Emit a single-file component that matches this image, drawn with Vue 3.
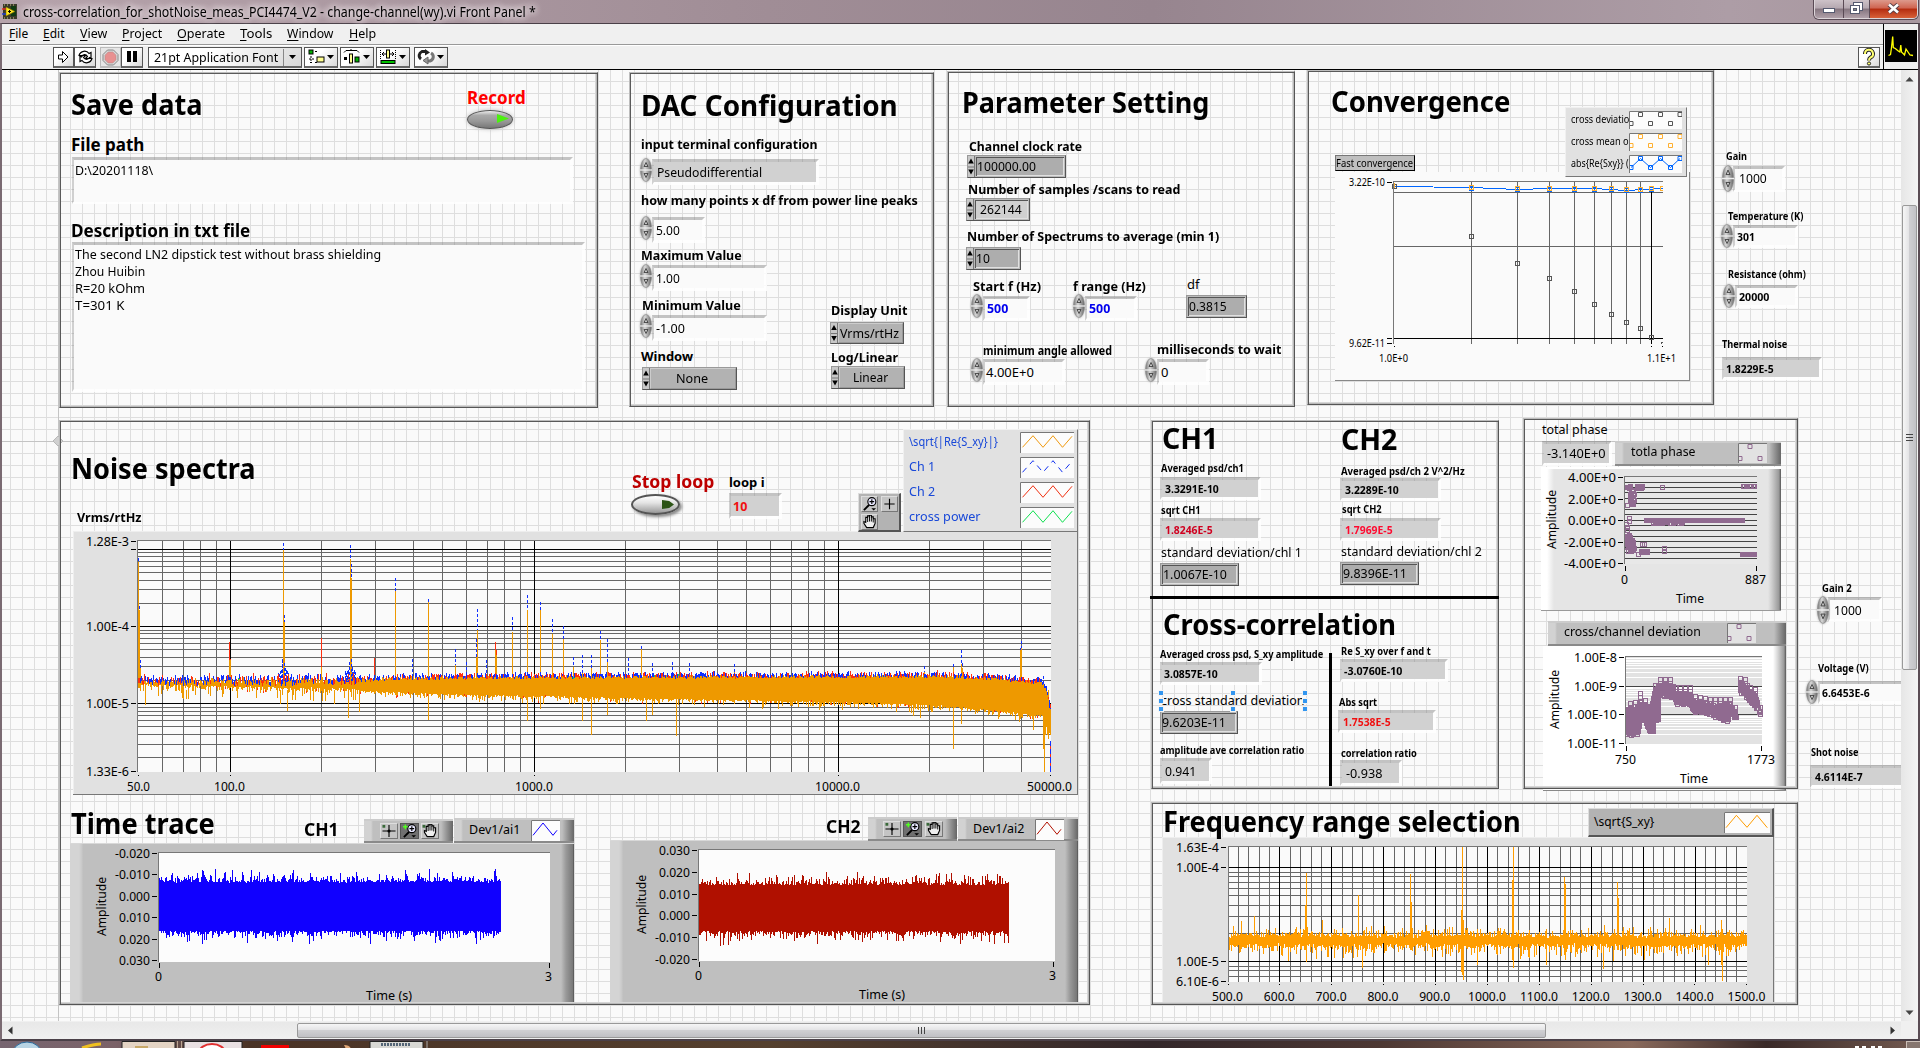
<script setup>
/* Front panel coordinates are window pixels; the canvas starts at (2, 70). */
const OX = 2
const OY = 70

const menus = [
  ['File', 9, 19], ['Edit', 43, 22], ['View', 80, 27], ['Project', 122, 40],
  ['Operate', 177, 48], ['Tools', 240, 32], ['Window', 287, 47], ['Help', 349, 27],
]

/* Scales a label horizontally so it takes exactly its assigned width. */
const vFit = {
  mounted(el, { value }) {
    const w = el.offsetWidth
    if (w && value) el.style.transform = `scaleX(${value / w})`
  },
}

const at = (x, y, x2, y2) => ({
  left: `${x - OX}px`, top: `${y - OY}px`, width: `${x2 - x}px`, height: `${y2 - y}px`,
})
const textAt = (x, base, size) => ({
  left: `${x - OX}px`, top: `${base - OY - size * 1.069 + 0.8}px`, fontSize: `${size}px`,
})

const frames = [
  [59, 72, 598, 408], [629, 72, 934, 407], [947, 71, 1295, 407], [1307, 70, 1714, 405],
  [59, 420, 1090, 1005], [1151, 420, 1499, 789], [1523, 418, 1798, 789], [1151, 802, 1798, 1005],
]

/* text, x, width, baseline, size, classes */
const labels = [
  ['Save data', 71, 132, 114, 28, 'b'],
  ['Record', 467, 59, 103, 17, 'b red'],
  ['File path', 71, 73, 150, 17, 'b'],
  ['D:\\20201118\\', 75, 78, 175, 13, ''],
  ['Description in txt file', 71, 179, 236, 17, 'b'],
  ['The second LN2 dipstick test without brass shielding', 75, 306, 259, 13, ''],
  ['Zhou Huibin', 75, 70, 276, 13, ''],
  ['R=20 kOhm', 75, 70, 293, 13, ''],
  ['T=301 K', 75, 49, 310, 13, ''],

  ['DAC Configuration', 641, 257, 115, 28, 'b'],
  ['input terminal configuration', 641, 177, 149, 13, 'b'],
  ['Pseudodifferential', 657, 105, 177, 13, ''],
  ['how many points x df from power line peaks', 641, 277, 205, 13, 'b'],
  ['5.00', 656, 24, 235, 13, ''],
  ['Maximum Value', 641, 101, 260, 13, 'b'],
  ['1.00', 656, 24, 283, 13, ''],
  ['Minimum Value', 642, 99, 310, 13, 'b'],
  ['-1.00', 656, 29, 333, 13, ''],
  ['Window', 641, 52, 361, 13, 'b'],
  ['None', 676, 32, 383, 13, ''],
  ['Display Unit', 831, 76, 315, 13, 'b'],
  ['Vrms/rtHz', 840, 59, 338, 13, ''],
  ['Log/Linear', 831, 67, 362, 13, 'b'],
  ['Linear', 853, 35, 382, 13, ''],

  ['Parameter Setting', 962, 247, 112, 28, 'b'],
  ['Channel clock rate', 969, 113, 151, 13, 'b'],
  ['100000.00', 977, 59, 171, 13, ''],
  ['Number of samples /scans to read', 968, 212, 194, 13, 'b'],
  ['262144', 980, 42, 214, 13, ''],
  ['Number of Spectrums to average (min 1)', 967, 252, 241, 13, 'b'],
  ['10', 976, 14, 263, 13, ''],
  ['Start f (Hz)', 973, 68, 291, 13, 'b'],
  ['f range (Hz)', 1073, 73, 291, 13, 'b'],
  ['500', 987, 21, 313, 13, 'b blue'],
  ['500', 1089, 21, 313, 13, 'b blue'],
  ['df', 1187, 12, 289, 13, ''],
  ['0.3815', 1189, 38, 311, 13, ''],
  ['minimum angle allowed', 983, 129, 354, 11.5, 'b'],
  ['4.00E+0', 986, 48, 377, 13, ''],
  ['milliseconds to wait', 1157, 124, 354, 13, 'b'],
  ['0', 1161, 7, 377, 13, ''],

  ['Convergence', 1331, 179, 111, 28, 'b'],
  ['cross deviatio', 1571, 58, 123, 11, ''],
  ['cross mean o', 1571, 58, 145, 11, ''],
  ['abs{Re{Sxy}} (', 1571, 58, 167, 11, ''],
  ['Fast convergence', 1336, 77, 167, 11, ''],

  ['Gain', 1726, 21, 159, 10.5, 'b'],
  ['1000', 1739, 28, 183, 13, ''],
  ['Temperature (K)', 1728, 75, 219, 10.5, 'b'],
  ['301', 1737, 18, 241, 11, 'b'],
  ['Resistance (ohm)', 1728, 78, 277, 10.5, 'b'],
  ['20000', 1739, 30, 301, 11, 'b'],
  ['Thermal noise', 1722, 65, 347, 10.5, 'b'],
  ['1.8229E-5', 1726, 48, 373, 11, 'b'],
  ['Gain 2', 1822, 30, 591, 10.5, 'b'],
  ['1000', 1834, 28, 615, 13, ''],
  ['Voltage (V)', 1818, 51, 671, 10.5, 'b'],
  ['6.6453E-6', 1822, 48, 697, 11, 'b'],
  ['Shot noise', 1811, 48, 755, 10.5, 'b'],
  ['4.6114E-7', 1815, 48, 781, 11, 'b'],

  ['Noise spectra', 71, 185, 478, 28, 'b'],
  ['Vrms/rtHz', 77, 65, 522, 13, 'b'],
  ['Stop loop', 632, 82, 487, 18, 'b maroon'],
  ['loop i', 729, 36, 487, 13, 'b'],
  ['10', 733, 14, 511, 12.5, 'b red2'],
  ['\\sqrt{|Re{S_xy}|}', 909, 89, 446, 13, 'lblue'],
  ['Ch 1', 909, 26, 471, 13, 'lblue'],
  ['Ch 2', 909, 26, 496, 13, 'lblue'],
  ['cross power', 909, 72, 521, 13, 'lblue'],

  ['Time trace', 71, 144, 833, 28, 'b'],
  ['CH1', 304, 35, 835, 17, 'b'],
  ['Dev1/ai1', 469, 51, 834, 12.5, ''],
  ['CH2', 826, 35, 832, 17, 'b'],
  ['Dev1/ai2', 973, 51, 833, 12.5, ''],

  ['CH1', 1162, 56, 448, 28, 'b'],
  ['CH2', 1341, 56, 449, 28, 'b'],
  ['Averaged psd/ch1', 1161, 83, 471, 10.5, 'b'],
  ['3.3291E-10', 1165, 54, 493, 11, 'b'],
  ['sqrt CH1', 1161, 40, 513, 10.5, 'b'],
  ['1.8246E-5', 1165, 48, 534, 11, 'b crimson'],
  ['standard deviation/chl 1', 1161, 141, 557, 12.5, ''],
  ['1.0067E-10', 1163, 64, 579, 13, ''],
  ['Averaged psd/ch 2 V^2/Hz', 1341, 124, 474, 10.5, 'b'],
  ['3.2289E-10', 1345, 54, 494, 11, 'b'],
  ['sqrt CH2', 1342, 40, 512, 10.5, 'b'],
  ['1.7969E-5', 1345, 48, 534, 11, 'b pinkred'],
  ['standard deviation/chl 2', 1341, 141, 556, 12.5, ''],
  ['9.8396E-11', 1343, 64, 578, 13, ''],
  ['Cross-correlation', 1163, 233, 634, 28, 'b'],
  ['Averaged cross psd, S_xy amplitude', 1160, 163, 657, 10.5, 'b'],
  ['3.0857E-10', 1164, 54, 678, 11, 'b'],
  ['cross standard deviation', 1161, 144, 705, 12.5, ''],
  ['9.6203E-11', 1162, 64, 727, 13, ''],
  ['amplitude ave correlation ratio', 1160, 144, 753, 10.5, 'b'],
  ['0.941', 1165, 31, 776, 13, ''],
  ['Re S_xy over f and t', 1341, 90, 654, 10.5, 'b'],
  ['-3.0760E-10', 1344, 58, 675, 11, 'b'],
  ['Abs sqrt', 1339, 38, 705, 10.5, 'b'],
  ['1.7538E-5', 1343, 48, 726, 11, 'b red2'],
  ['correlation ratio', 1341, 76, 756, 10.5, 'b'],
  ['-0.938', 1346, 36, 778, 13, ''],

  ['total phase', 1542, 66, 434, 12.5, ''],
  ['-3.140E+0', 1547, 59, 458, 13, ''],
  ['totla phase', 1631, 65, 456, 12.5, ''],
  ['cross/channel deviation', 1564, 137, 636, 12.5, ''],
  ['Frequency range selection', 1163, 358, 831, 28, 'b'],
  ['\\sqrt{S_xy}', 1594, 60, 826, 12, ''],
]

/* x, y, x2, y2, fill class */
const sunken = [
  [72, 157, 573, 204, ''], [72, 242, 585, 392, ''],
  [652, 159, 819, 185, 'gray'], [652, 217, 705, 243, ''], [652, 265, 767, 291, ''], [652, 315, 767, 341, ''],
  [983, 296, 1030, 321, ''], [1085, 296, 1137, 321, ''], [983, 359, 1065, 385, ''], [1157, 359, 1209, 385, ''],
  [1733, 166, 1785, 192, ''], [1733, 225, 1798, 248, ''], [1735, 285, 1798, 308, ''], [1722, 357, 1822, 380, 'gray'],
  [1828, 597, 1882, 622, ''], [1818, 681, 1904, 704, ''], [1810, 765, 1904, 788, 'gray'],
  [729, 493, 782, 519, 'gray'],
  [1160, 477, 1261, 500, 'gray'], [1160, 518, 1261, 541, 'gray'],
  [1340, 478, 1441, 501, 'gray'], [1340, 518, 1441, 541, 'gray'],
  [1160, 662, 1262, 685, 'gray'], [1160, 758, 1212, 784, 'gray'],
  [1340, 659, 1448, 682, 'gray'], [1338, 710, 1436, 733, 'gray'], [1340, 760, 1402, 786, 'gray'],
  [1542, 441, 1612, 466, 'gray'],
]

const rings = [[642, 367, 737, 390], [830, 322, 904, 344], [831, 366, 905, 389]]
const numerics = [[967, 155, 1066, 178, ''], [966, 198, 1030, 221, 'lit'], [966, 247, 1021, 270, '']]
const indicators = [
  [1186, 295, 1247, 318], [1160, 563, 1239, 586], [1340, 562, 1419, 585], [1160, 711, 1238, 734],
]
const knobs = [
  [640, 158, 652, 182], [640, 216, 652, 240], [640, 264, 652, 288], [640, 314, 652, 338],
  [971, 294, 983, 318], [1073, 294, 1085, 318], [971, 358, 983, 382], [1145, 358, 1157, 382],
  [1722, 165, 1734, 192], [1721, 224, 1733, 248], [1723, 284, 1735, 308],
  [1817, 596, 1829, 624], [1806, 680, 1818, 704],
]

/* x, y, x2, y2, class */
const plates = [
  [1565, 107, 1687, 177, 'flat'], [903, 429, 1078, 532, 'flat'], [858, 493, 901, 532, 'dark'],
  [364, 819, 453, 843, 'metal'], [454, 818, 574, 843, 'metal'],
  [868, 817, 957, 841, 'metal'], [958, 817, 1078, 841, 'metal'],
  [1615, 441, 1781, 466, 'metal'], [1548, 621, 1786, 646, 'metal'],
  [1588, 808, 1774, 837, 'dark'], [1335, 155, 1415, 171, 'tag'],
]

const zig3 = [[2.5, 15.3], [13, 3.7], [23, 15.3], [33, 3.7], [42.5, 15.3], [52, 4.3]]
const zig2 = [[2, 15.7], [12.4, 3.3], [23, 15.3], [33, 3.3], [43.3, 15.7]]
const zig1 = [[2, 15.3], [12, 3], [22, 15.3], [26, 10.3]]
const six = [[2, 12.5], [11.5, 3.5], [21.5, 12.5], [31.5, 3.5], [41.5, 12.5], [51, 3.5]]
const three = [[2, 15.5], [12, 3.5], [22, 15.5]]
const poly = (pts) => 'M' + pts.map((p) => p.join(' ')).join('L')
const sq = (pts, r = 2) => pts.map(([x, y]) => `M${x - r} ${y - r}h${2 * r}v${2 * r}h${-2 * r}z`).join('')
const swatch = (x, y, w, h, color, d, extra = {}) => ({ x, y, w, h, color, d, ...extra })
const swatches = [
  swatch(1020, 432, 54, 21, '#f09a10', poly(zig3)),
  swatch(1020, 457, 54, 21, '#1030f0', poly(zig3), { dash: '6 5' }),
  swatch(1020, 482, 54, 21, '#f03010', poly(zig3)),
  swatch(1020, 507, 54, 21, '#10e050', poly(zig3)),
  swatch(1629, 111, 53, 18, '#555', sq(six)),
  swatch(1629, 133, 53, 18, '#ffb030', sq(six)),
  swatch(1629, 155, 53, 18, '#0066ff', poly(six) + sq(six)),
  swatch(531, 820, 29, 21, '#1000ff', poly(zig1)),
  swatch(1035, 819, 29, 21, '#b01000', poly(zig1)),
  swatch(1738, 443, 29, 20, '#906a90', sq(three), { bg: '#e2e2e2' }),
  swatch(1727, 623, 29, 20, '#906a90', sq(three), { bg: '#e2e2e2' }),
  swatch(1724, 812, 46, 21, '#ff9d00', poly(zig2)),
]

/* x, y, w, h, tool, pressed */
const tools = [
  [861, 496, 17, 16, 'zoom', false], [881, 496, 17, 16, 'cross', false], [861, 514, 17, 16, 'hand', false],
  [380, 823, 18, 16, 'cursor', false], [400, 823, 19, 16, 'zoomled', true], [421, 823, 18, 16, 'handled', false],
  [883, 821, 18, 16, 'cursor', false], [903, 821, 19, 16, 'zoomled', true], [925, 821, 18, 16, 'handled', false],
]

/* ---------- waveforms ---------- */
function prng(seed) {
  let a = seed
  return () => {
    a = (a + 0x6d2b79f5) | 0
    let t = Math.imul(a ^ (a >>> 15), 1 | a)
    t = (t + Math.imul(t ^ (t >>> 7), 61 | t)) ^ t
    return ((t ^ (t >>> 14)) >>> 0) / 4294967296
  }
}
const lerp = (table, x) => {
  for (let i = 1; i < table.length; i++) {
    if (x <= table[i][0]) {
      const [x0, y0] = table[i - 1]
      const [x1, y1] = table[i]
      return y0 + ((y1 - y0) * (x - x0)) / (x1 - x0)
    }
  }
  return table[table.length - 1][1]
}
const seg = (x, a, b) => `M${Math.round(x) + 0.5} ${a.toFixed(1)}V${b.toFixed(1)}`
const dashed = (x, a, b) => {
  let d = ''
  for (let y = a; y < b; y += 5) d += seg(x, y, Math.min(y + 3.4, b))
  return d
}
const hl = (ys, a, b) => ys.map((y) => `M${a} ${Math.floor(y) + 0.5}H${b}`).join('')
const vl = (xs, a, b) => xs.map((x) => `M${Math.floor(x) + 0.5} ${a}V${b}`).join('')

function spectrum() {
  const r = prng(11)
  const topT = [[138, 681], [340, 680], [400, 677], [550, 676], [940, 675], [1000, 678], [1042, 682], [1046, 690], [1050, 708]]
  const botT = [[138, 686], [340, 690], [450, 694], [600, 697], [850, 702], [940, 705], [1000, 711], [1042, 715], [1050, 735]]
  let o = '', b = '', rd = '', g = ''
  for (let x = 138; x <= 1050; x++) {
    const left = x < 360
    const t = lerp(topT, x) + (left ? (r() - 0.5) * 7 : r() * 3 - 1)
    const e = -Math.log(1 - r() * 0.97)
    const bt = lerp(botT, x) + (left ? e * 4.2 - 2 : e * 2.6)
    o += seg(x, t, Math.min(bt, 772))
    const k = r()
    if (k < 0.5) b += seg(x, t - 1 - r() * 3, t + (left ? 2 : 1))
    else if (k < 0.8) rd += seg(x, t - 1 - r() * (left ? 4 : 3), t + (left ? 2 : 1))
    else if (k < 0.81) g += seg(x, t - 1, t + 1)
    if (r() < 0.05) rd += seg(x, bt - 1, bt + 1)
  }
  const near = (x0) => {
    for (let d = -5; d <= 5; d++) if (d) b += dashed(x0 + d, 679 - 16 / Math.abs(d) - r() * 5, 682)
  }
  near(283); near(350)
  /* x, blue top, orange top, optional lower end, red flag */
  const spikes = [
    [138, 557.5, 562], [139, 606, 610], [140, 660, 668], [229, 642, 660, 0, 1], [230, 659, 660, 0, 1], [283, 543, 549.5], [284, 615, 622],
    [321, 638, 667, 0, 1], [350, 545, 559], [351, 564, 578], [374, 658, 675, 0, 1], [395, 578, 591], [428, 599, 602, 720],
    [455, 649, 665], [476, 639, 657], [477, 609, 630], [486, 660, 676], [495, 642, 650, 0, 1], [496, 650, 655, 0, 1], [512, 617, 632],
    [527, 595, 610, 721], [540, 602, 610, 709], [552, 619, 634], [563, 626, 639], [573, 657, 667], [582, 655, 673, 721],
    [591, 655, 668, 735], [600, 631, 640], [607, 639, 662, 715], [628, 658, 676], [641, 646, 649], [652, 663, 676, 715],
    [672, 662, 675], [689, 663, 676], [734, 664, 672], [412, 659, 676], [466, 662, 676], [953, 664, 667, 749],
    [961, 650, 664, 724], [962, 663, 668], [1021, 641, 648], [1020, 648, 650], [924, 666, 672], [1043, 676, 684],
  ]
  for (const [x, bt, ot, low, isRed] of spikes) {
    o += seg(x, ot, low || 688)
    if (isRed) rd += seg(x, bt, ot)
    else b += dashed(x, bt, ot)
  }
  for (const [x, y] of [[348, 718], [359, 712], [287, 711], [145, 705], [186, 699], [280, 704], [334, 704], [646, 721], [676, 736], [913, 716], [920, 718], [1033, 730], [1044, 772], [1043, 749], [1045, 735], [1048, 739]])
    o += seg(x, 690, y)
  b += seg(1049, 700, 708) + 'M1050.5 705V709M1050.5 741V746M1050.5 749V754M1050.5 757V763M1050.5 766V772'
  rd += 'M1050.5 746V749M1050.5 754V757M1050.5 763V766'
  return { o, b, rd, g }
}
const sp = spectrum()

function burst(seed, x0, x1, top, bot) {
  const r = prng(seed)
  let d = ''
  for (let x = x0; x <= x1; x++) {
    const u = -Math.log(1 - r() * 0.98)
    const l = -Math.log(1 - r() * 0.98)
    d += seg(x, top - u * 3.7, bot + l * 3.7)
  }
  return d
}

function rangeWave() {
  const r = prng(77)
  let d = ''
  for (let x = 1228; x <= 1746; x++) {
    const u = -Math.log(1 - r() * 0.95)
    const l = -Math.log(1 - r() * 0.97)
    d += seg(x, 935 - u * 3.6 + r() * 3, 946 + l * 4.2 - r() * 3)
  }
  const fx = (f) => 1228 + (f - 500) * 0.519
  for (const [f, t, b] of [
    [550, 916, 950], [649, 905, 950], [651, 873, 962], [750, 895, 950], [751, 922, 950], [850, 874, 950], [852, 902, 950],
    [948, 910, 972], [950, 847, 975], [952, 920, 980], [1048, 880, 960], [1050, 847, 968], [1148, 877, 955], [1150, 884, 960],
    [1249, 882, 950], [1251, 898, 950], [1350, 918, 950], [1449, 920, 965], [1451, 930, 981], [681, 920, 945], [526, 921, 940],
    [616, 940, 961], [758, 935, 968], [980, 940, 965], [1112, 940, 965], [1223, 940, 969], [1241, 940, 961], [1425, 940, 965], [1302, 940, 960], [692, 940, 957],
  ]) d += seg(fx(f), t, b)
  return d
}

const logTicks = (lo, hi, f) => {
  const minor = []
  const major = []
  for (let e = Math.floor(Math.log10(lo)); e <= Math.log10(hi); e++)
    for (let k = 1; k < 10; k++) {
      const v = k * 10 ** e
      if (v > lo * 1.001 && v < hi * 0.999) (k === 1 ? major : minor).push(f(v))
    }
  return { minor, major }
}

const nsY = logTicks(1.33e-6, 1.28e-3, (v) => 549.3 - (Math.log10(v) + 3) * 77.2)
const nsX = logTicks(50, 50000, (v) => 230.4 + (Math.log10(v) - 2) * 303.9)
const frY = logTicks(6.1e-6, 1.63e-4, (v) => 867.7 - (Math.log10(v) + 4) * 94)
const dvY = logTicks(1e-11, 1e-8, (v) => 657.3 - (Math.log10(v) + 8) * 28.7)
const frMinor = []
const frMajor = []
for (let i = 1; i < 50; i++) (i % 5 ? frMinor : frMajor).push(1228 + i * 10.38)

const cvX = [1471, 1517, 1549, 1574, 1594, 1611, 1626, 1640, 1651]
const cvDev = [[1394.5, 186.5], [1471.5, 236.5], [1517.5, 263.5], [1549.5, 278.5], [1574.5, 291.5], [1594.5, 304.5], [1611.5, 314.5], [1626.5, 322.5], [1640.5, 328.5], [1651.5, 337.5]]
const cvMean = [187.5, 188.5, 188.5, 188.5, 188.5, 188.5, 189.5, 189.5, 188.5].map((y, i) => [cvX[i] + 0.5, y])
const cvAbs = cvMean.map(([x, y]) => [x, y + 1])

function phaseMarks() {
  const r = prng(5)
  const d = []
  const cloud = (x0, x1, y0, y1, n) => {
    for (let i = 0; i < n; i++) d.push([Math.round(x0 + r() * (x1 - x0)) + 0.5, Math.round(y0 + r() * (y1 - y0)) + 0.5])
  }
  cloud(1627, 1630, 486, 488, 5)
  cloud(1637, 1642, 486, 488, 30)
  cloud(1630, 1634, 489, 505, 26)
  cloud(1646, 1743, 520, 520, 260)
  cloud(1652, 1682, 521, 523, 36)
  cloud(1626, 1628, 520, 530, 3)
  cloud(1626, 1630, 535, 548, 45)
  cloud(1630, 1634, 540, 551, 40)
  cloud(1640, 1647, 551, 552, 20)
  cloud(1742, 1755, 554, 554, 50)
  cloud(1742, 1755, 486, 486, 14)
  d.push([1627.5, 505.5], [1632.5, 504.5], [1662.5, 487.5], [1629.5, 518.5], [1629.5, 521.5], [1642.5, 544.5], [1644.5, 544.5], [1664.5, 548.5], [1664.5, 551.5], [1638.5, 554.5], [1628.5, 551.5])
  return sq(d)
}
function deviationMarks() {
  const r = prng(9)
  const run = (tops, bots, x0, x1) => {
    const d = []
    for (let x = x0; x <= x1; x++) {
      const t = lerp(tops, x) + 1
      const b = lerp(bots, x) - 1 - r() * 3
      for (let y = t + 4 + r() * 4; y < b; y += 3) d.push([x + 0.5, Math.round(y + r() * 2) + 0.5])
      if (x % 5 === 0) d.push([x + 0.5, Math.round(t) + 0.5], [x + 0.5, Math.round(t) + 4.5])
    }
    return d
  }
  return sq([
    ...run(
      [[1626, 700], [1632, 703], [1637, 700], [1640, 692], [1645, 699], [1649, 711], [1652, 694], [1656, 680], [1662, 677], [1673, 679], [1674, 686], [1691, 686], [1692, 694], [1711, 698], [1730, 698], [1735, 706], [1739, 720]],
      [[1626, 736], [1638, 735], [1640, 720], [1645, 722], [1649, 733], [1653, 733], [1654, 722], [1658, 722], [1659, 697], [1673, 699], [1675, 705], [1690, 706], [1693, 713], [1711, 715], [1720, 721], [1727, 721], [1731, 713], [1739, 727]],
      1627, 1738),
    ...run([[1739, 677], [1746, 678], [1750, 686], [1755, 688], [1759, 703], [1761, 709]], [[1739, 692], [1746, 697], [1750, 703], [1756, 709], [1761, 717]], 1740, 1760),
  ])
}

const tick = (ys, x, w = 5) => ys.map((y) => `M${x} ${Math.floor(y) + 0.5}h${w}`).join('')
const foot = (xs, y, h = 2) => xs.map((x) => `M${Math.floor(x) + 0.5} ${y}v${h}`).join('')

const charts = [
  {
    box: [1335, 172, 1690, 381], cls: 'plain', size: 11, plot: [1393, 181, 1663, 344], fill: '#fafafa',
    layers: [
      ['#666', hl([192, 246], 1394, 1663) + vl(cvX.slice(0, 8), 182, 344)],
      ['#000', hl([338], 1394, 1663) + vl([1651], 190, 344)],
      ['#0066ff', 'M1394 186.5L1471 187.5L1517 189.5L1549 188.5L1594 188.5L1626 190.5L1663 188.5' + sq(cvAbs)],
      ['#555', sq(cvDev) + 'M1661.5 344V342.5H1663'],
      ['#ffb030', sq(cvMean) + 'M1394.5 183V188M1663 186.5h-3v4h3'],
      ['#000', tick([182, 338, 343], 1387) + foot([1394, 1651, 1662], 346, 1)],
    ],
    texts: [['3.22E-10', 1349, 36, 186], ['9.62E-11', 1349, 36, 347], ['1.0E+0', 1379, 29, 361.5], ['1.1E+1', 1647, 29, 361.5]],
  },
  {
    box: [73, 531, 1078, 795], cls: 'light', size: 13, plot: [137, 540, 1051, 772], fill: '#fafafa',
    layers: [
      ['#666', hl(nsY.minor, 138, 1051) + vl(nsX.minor, 541, 772)],
      ['#000', hl(nsY.major, 138, 1051) + vl(nsX.major, 541, 772)],
      ['#ee9900', sp.o], ['#1030ff', sp.b], ['#ff3010', sp.rd], ['#10e040', sp.g],
      ['#000', tick([541, 549, 626, 703, 771], 131) + foot([138, 230, 534, 838, 1050], 775, 1)],
    ],
    texts: [
      ['1.28E-3', 86, 43, 545.5], ['1.00E-4', 86, 43, 631], ['1.00E-5', 86, 43, 708], ['1.33E-6', 86, 43, 775.5],
      ['50.0', 127, 23, 791], ['100.0', 214, 31, 791], ['1000.0', 515, 38, 791], ['10000.0', 815, 45, 791], ['50000.0', 1027, 45, 791],
    ],
  },
  {
    box: [70, 843, 574, 1002], cls: 'bar', size: 12.5, plot: [158, 852, 550, 962], fill: '#fcfcfc',
    layers: [
      ['#1000ff', burst(3, 159, 500, 882.5, 930.5)],
      ['#000', tick([853, 874, 896, 917, 939, 960], 152) + foot([159, 549], 963, 5)],
    ],
    texts: [
      ['-0.020', 115, 35, 858], ['-0.010', 115, 35, 879], ['0.000', 119, 31, 901], ['0.010', 119, 31, 922], ['0.020', 119, 31, 944], ['0.030', 119, 31, 965],
      ['0', 155, 7, 981], ['3', 545, 7, 981], ['Time (s)', 366, 46, 1000], ['Amplitude', 106, 59, 936, 1],
    ],
  },
  {
    box: [610, 840, 1078, 1002], cls: 'bar', size: 12.5, plot: [698, 849, 1055, 961], fill: '#fcfcfc',
    layers: [
      ['#b01000', burst(8, 699, 1008, 885, 931)],
      ['#000', tick([850, 872, 894, 915, 937, 959], 692) + foot([699, 1053], 962, 5)],
    ],
    texts: [
      ['0.030', 659, 31, 855], ['0.020', 659, 31, 877], ['0.010', 659, 31, 899], ['0.000', 659, 31, 920], ['-0.010', 655, 35, 942], ['-0.020', 655, 35, 964],
      ['0', 695, 7, 980], ['3', 1049, 7, 980], ['Time (s)', 859, 46, 999], ['Amplitude', 646, 59, 934, 1],
    ],
  },
  {
    box: [1541, 467, 1781, 611], cls: 'phase', size: 12.5, plot: [1624, 476, 1757, 564], fill: '#e8e8e8',
    layers: [
      ['#444', hl(Array.from({ length: 15 }, (_, i) => 482 + i * 5.44), 1625, 1757)],
      ['#906a90', phaseMarks()],
      ['#000', tick([477, 499, 520, 542, 563], 1618) + foot([1625, 1756], 566, 5)],
    ],
    texts: [
      ['4.00E+0', 1568, 48, 482], ['2.00E+0', 1568, 48, 504], ['0.00E+0', 1568, 48, 525], ['-2.00E+0', 1564, 52, 547], ['-4.00E+0', 1564, 52, 568],
      ['0', 1621, 7, 584], ['887', 1745, 21, 584], ['Time', 1676, 28, 603], ['Amplitude', 1556, 59, 549, 1],
    ],
  },
  {
    box: [1543, 646, 1786, 791], cls: 'dev', size: 12.5, plot: [1625, 656, 1762, 744], fill: '#e2e2e2',
    layers: [
      ['#fff', hl(dvY.minor, 1626, 1762)],
      ['#444', hl([686, 714], 1626, 1762)],
      ['#906a90', deviationMarks()],
      ['#000', tick([657, 686, 714, 743], 1619) + foot([1626, 1761], 746, 5)],
    ],
    texts: [
      ['1.00E-8', 1574, 43, 662], ['1.00E-9', 1574, 43, 691], ['1.00E-10', 1567, 50, 719], ['1.00E-11', 1567, 50, 748],
      ['750', 1615, 21, 764], ['1773', 1747, 28, 764], ['Time', 1680, 28, 783], ['Amplitude', 1559, 59, 729, 1],
    ],
  },
  {
    box: [1162, 837, 1774, 1002], cls: 'light nob', size: 12.5, plot: [1228, 846, 1747, 982], fill: '#fafafa',
    layers: [
      ['#666', hl(frY.minor, 1229, 1747) + vl(frMinor, 847, 982)],
      ['#000', hl(frY.major, 1229, 1747) + vl(frMajor, 847, 982)],
      ['#ff9d00', rangeWave()],
      ['#000', tick([847, 867, 961, 981], 1221) + foot([1228, 1279, 1331, 1383, 1435, 1487, 1539, 1591, 1643, 1694, 1746], 984, 1)],
    ],
    texts: [
      ['1.63E-4', 1176, 43, 852], ['1.00E-4', 1176, 43, 872], ['1.00E-5', 1176, 43, 966], ['6.10E-6', 1176, 43, 986],
      ...[500, 600, 700, 800, 900].map((v, i) => [`${v}.0`, 1212 + i * 51.8, 31, 1001]),
      ...[1000, 1100, 1200, 1300, 1400, 1500].map((v, i) => [`${v}.0`, 1468 + i * 51.9, 38, 1001]),
    ],
  },
]

const handles = [[1159, 691], [1231, 691], [1303, 691], [1159, 699], [1303, 699], [1159, 707], [1231, 707], [1303, 707]]
</script>

<template>
  <div class="desktop">
    <header class="titlebar">
      <svg class="appicon" width="16" height="16" viewBox="0 0 16 16">
        <rect x="1" y="0" width="14" height="15" fill="#3a3a2a" />
        <path d="M2 1h1M5 1h1M8 1h1M11 1h1M2 14h1M5 14h1M8 14h1M11 14h1" stroke="#cc8" />
        <rect x="9" y="2" width="5" height="10" fill="#103a10" />
        <path d="M4 3L13 7.500L4 12z" fill="#ffe820" stroke="#887000" stroke-width=".6" />
        <path d="M6 7.500h3M7.500 6v3" stroke="#000" /><path d="M0 5h4" stroke="#e03020" stroke-width="1.500" /><path d="M0 10h4" stroke="#2040d0" stroke-width="1.500" />
      </svg>
      <span v-fit="513" class="wintitle">cross-correlation_for_shotNoise_meas_PCI4474_V2 - change-channel(wy).vi Front Panel *</span>
      <div class="winbtns">
        <span class="wb min"><svg width="12" height="12" viewBox="0 0 12 12"><rect x=".5" y="6.500" width="11" height="4" fill="#fff" stroke="#555a70" /></svg></span>
        <span class="wb max"><svg width="13" height="12" viewBox="0 0 13 12"><rect x="3.500" y=".5" width="9" height="8" fill="#fff" stroke="#555a70" /><rect x=".5" y="3.500" width="9" height="8" fill="#fff" stroke="#555a70" /><rect x="3.500" y="6.500" width="3" height="2" fill="#888" stroke="#555a70" /></svg></span>
        <span class="wb close"><svg width="13" height="11" viewBox="0 0 13 11"><path d="M2 1.500L11 9.500M11 1.500L2 9.500" stroke="#5a4048" stroke-width="4.500" /><path d="M2 1.500L11 9.500M11 1.500L2 9.500" stroke="#fff" stroke-width="2.600" /></svg></span>
      </div>
    </header>

    <div class="window">
      <div class="chrome">
        <div class="bars">
          <nav class="menubar">
            <span v-for="m in menus" :key="m[0]" class="menu" :style="{ left: m[1] - 2 + 'px' }"><span v-fit="m[2]" class="mt"><u>{{ m[0][0] }}</u>{{ m[0].slice(1) }}</span></span>
          </nav>
          <div class="toolbar">
            <span class="tb w21"><svg width="15" height="14" viewBox="0 0 15 14"><path d="M2.500 5h4V1.500L12 7L6.500 12.500V9h-4z" fill="#fff" stroke="#000" /></svg></span>
            <span class="tb w22"><svg width="17" height="16" viewBox="0 0 17 16"><path d="M2 6.500C3.500 1.500 9.500 1 12 4.500l2-1v6H8.500l2-2C9 5 6 5 4.500 8zM15 9.500c-1.500 5-7.500 5.500-10 2l-2 1V6.500h5.500l-2 2c1.500 2.500 4.500 2.500 6 0z" fill="#fff" stroke="#000" stroke-width="1.200" /></svg></span>
            <span class="tb w21 off gap"><svg width="17" height="17" viewBox="0 0 17 17"><path d="M5.500 1h6L16 5.500v6L11.500 16h-6L1 11.500v-6z" fill="#d8d8d8" stroke="#888" /><path d="M6.200 3h4.600L14 6.200v4.600L10.800 14H6.200L3 10.800V6.200z" fill="#e89090" stroke="#b08080" stroke-width=".5" /></svg></span>
            <span class="tb w22"><svg width="12" height="12" viewBox="0 0 12 12"><path d="M1 0h4v11H1zM7 0h4v11H7z" /></svg></span>
            <span class="tb font"><span class="ft"><span v-fit="124" class="mt big">21pt Application Font</span></span><i class="div"></i><svg width="9" height="6" viewBox="0 0 9 6"><path d="M1 1h7L4.500 5z" /></svg></span>
            <span class="tb w34"><svg width="28" height="16" viewBox="0 0 28 16"><rect x="2" y="1" width="4" height="4" fill="#00b000" stroke="#000" /><path d="M8 2.500h2M8 13.500h2M3 13.500h2M4 7v5M2 10h5" stroke="#000" stroke-dasharray="2 1" /><rect x="10" y="8" width="7" height="5" fill="#ffff90" stroke="#000" /><path d="M20 6h7l-3.500 4z" /></svg></span>
            <span class="tb w34"><svg width="28" height="16" viewBox="0 0 28 16"><path d="M1 3.500L3 1.500h11L16 3.500M8 1.500V0" fill="none" stroke="#000" /><rect x="1" y="8" width="3" height="3" /><rect x="6.500" y="5" width="3" height="9" fill="#ffff90" stroke="#000" /><rect x="12" y="8" width="4" height="5" fill="#00b000" stroke="#000" /><path d="M20 6h7l-3.500 4z" /></svg></span>
            <span class="tb w34"><svg width="28" height="16" viewBox="0 0 28 16"><path d="M1.500 1v9M16.500 1v9" stroke="#000" stroke-dasharray="1 1" /><path d="M3 5h4M11 5h4M5 3L3 5l2 2M13 3l2 2l-2 2" fill="none" stroke="#000" /><rect x="7.500" y="1" width="3" height="8" fill="#ffff90" stroke="#000" /><rect x="2" y="11.500" width="14" height="3" fill="#00c000" stroke="#000" /><path d="M20 6h7l-3.500 4z" /></svg></span>
            <span class="tb w34 gap"><svg width="28" height="16" viewBox="0 0 28 16"><path d="M4 10a5 4.500 0 0 1 1-7.500h4" fill="none" stroke="#222" stroke-width="3" /><path d="M8 0l5 3.500l-5 3z" fill="#222" /><path d="M14 4a5 4.500 0 0 1-1 8h-2" fill="none" stroke="#777" stroke-width="3" /><path d="M11 8v7l-5-3.500z" fill="#999" stroke="#666" /><path d="M20 6h7l-3.500 4z" /></svg></span>
            <span class="tb help"><svg width="14" height="18" viewBox="0 0 14 18"><path d="M3 6a4 4 0 1 1 5.500 3.500Q7 10.500 7 12.500" fill="none" stroke="#222" stroke-width="4" /><path d="M3 6a4 4 0 1 1 5.500 3.500Q7 10.500 7 12.500" fill="none" stroke="#ffff70" stroke-width="2" /><circle cx="7" cy="15.500" r="1.600" fill="#ffff70" stroke="#222" /></svg></span>
          </div>
        </div>
        <div class="viicon"><svg width="32" height="32" viewBox="0 0 32 32"><rect width="32" height="32" /><path d="M3.500 25.500l2-1l1-7l1.200-11l.6 11l2 1l3 2.500l1.500 1l1-7l.7 7l3 3l1.500-6l2 3l2 3l3 .5" fill="none" stroke="#ffff00" stroke-width="1.300" /></svg></div>
      </div>

      <div class="work">
        <main class="panel">
          <i class="origin-v"></i><i class="origin-h"></i>
          <svg class="origin" viewBox="0 0 10 10"><path d="M5 0L10 5L5 10L0 5z" fill="#d0d0d0" stroke="#b8b8b8" /></svg>

          <svg v-for="(c, i) in charts" :key="'c' + i" class="chart" :class="c.cls" :style="at(...c.box)" :viewBox="`${c.box[0]} ${c.box[1]} ${c.box[2] - c.box[0]} ${c.box[3] - c.box[1]}`">
            <rect :x="c.plot[0]" :y="c.plot[1]" :width="c.plot[2] - c.plot[0]" :height="c.plot[3] - c.plot[1]" :fill="c.fill" />
            <path v-for="(l, k) in c.layers" :key="k" class="px" :d="l[1]" fill="none" :stroke="l[0]" />
            <path class="px" :d="`M${c.plot[0] + .5} ${c.plot[3]}V${c.plot[1] + .5}H${c.plot[2]}`" fill="none" stroke="#777" />
            <text v-for="(t, k) in c.texts" :key="'t' + k" :x="t[1]" :y="t[3]" :textLength="t[2]" lengthAdjust="spacingAndGlyphs" :font-size="c.size" :transform="t[4] ? `rotate(-90 ${t[1]} ${t[3]})` : null">{{ t[0] }}</text>
          </svg>

          <div v-for="(f, i) in frames" :key="'f' + i" class="frame" :style="at(...f)"></div>
          <div v-for="(p, i) in plates" :key="'p' + i" class="plate" :class="p[4]" :style="at(p[0], p[1], p[2], p[3])"></div>
          <div v-for="(s, i) in sunken" :key="'s' + i" class="sunken" :class="s[4]" :style="at(s[0], s[1], s[2], s[3])"></div>

          <div v-for="(r, i) in rings" :key="'r' + i" class="ring" :style="at(...r)">
            <span class="steps"><svg viewBox="0 0 6 20"><path d="M3 2L5.800 7H.2zM3 18L5.800 13H.2z" /><path d="M0 10.500h6" stroke="#777" /></svg></span><span class="face"></span>
          </div>
          <div v-for="(n, i) in numerics" :key="'n' + i" class="ring" :style="at(n[0], n[1], n[2], n[3])">
            <span class="steps"><svg viewBox="0 0 6 20"><path d="M3 2L5.800 7H.2zM3 18L5.800 13H.2z" /><path d="M0 10.500h6" stroke="#777" /></svg></span><span class="face well" :class="n[4]"></span>
          </div>
          <div v-for="(n, i) in indicators" :key="'i' + i" class="ring" :style="at(...n)"><span class="face well"></span></div>

          <svg v-for="(k, i) in knobs" :key="'k' + i" class="knob" :style="at(...k)" viewBox="0 0 12 24" preserveAspectRatio="none">
            <defs><linearGradient id="kg"><stop offset="0" stop-color="#777" /><stop offset=".4" stop-color="#d8d8d8" /><stop offset="1" stop-color="#666" /></linearGradient></defs>
            <ellipse cx="6" cy="12" rx="5.500" ry="11.500" fill="url(#kg)" stroke="#888" stroke-width=".6" />
            <path d="M0 12h12" stroke="#eee" stroke-width="1.300" />
            <path d="M4 8.500L6 4.500L8 8.500z M4 15.500L6 19.500L8 15.500z" fill="#c4c4c4" stroke="#333" stroke-width=".8" />
          </svg>

          <svg v-for="(s, i) in swatches" :key="'w' + i" class="swatch" :style="{ ...at(s.x, s.y, s.x + s.w, s.y + s.h), background: s.bg }" :viewBox="`0 0 ${s.w} ${s.h}`">
            <path :d="s.d" fill="none" :stroke="s.color" :stroke-dasharray="s.dash" />
            <path :d="`M.5 ${s.h}V.5H${s.w}`" fill="none" stroke="#777" />
          </svg>

          <span v-for="(t, i) in tools" :key="'t' + i" class="tool" :class="{ down: t[5] }" :style="at(t[0], t[1], t[0] + t[2], t[1] + t[3])">
            <svg viewBox="1 1 16 15">
              <path v-if="t[4] === 'cross'" d="M9 3v11M3.500 8.500h11" stroke="#000" stroke-width="1.200" />
              <g v-else-if="t[4] === 'cursor'"><rect x="2" y="2" width="3" height="3" fill="#3a6a3a" /><path d="M9 2v13M2 8.500h14" stroke="#000" stroke-width="1.200" /><circle cx="9" cy="8.500" r="1.700" /></g>
              <g v-else-if="t[4].startsWith('zoom')"><path d="M9 9L3 15" stroke="#000" stroke-width="2" /><circle cx="11.500" cy="6" r="4.300" fill="#e8e8ff" stroke="#000" stroke-width="1.200" /><path d="M9 6h5M11.500 3.500v5" stroke="#000" stroke-width="1.200" /><path d="M11 13h5l-2.500 2.500z" /><path v-if="t[4] === 'zoomled'" d="M2 4h5M4.500 1.500v5" stroke="#50ff20" stroke-width="1.500" /></g>
              <g v-else><rect v-if="t[4] === 'handled'" x="1" y="2" width="3" height="3" fill="#3a6a3a" /><path d="M6 14.500L3 10V8l2 1V3.500h2V2h2V1.200h2V3h2v2h2v5l-2 4.500z" fill="#eee" stroke="#000" stroke-width="1.200" /><path d="M7 3.500v5M9 2v6M11 3v5M13 5v4" stroke="#000" /></g>
            </svg>
          </span>

          <span class="oval rec"><i class="lamp on"></i></span>
          <span class="oval stop"><i class="lamp"></i></span>
          <i class="rule-h"></i><i class="rule-v"></i>

          <span v-for="(l, i) in labels" :key="'l' + i" v-fit="l[2]" class="label" :class="l[5]" :style="textAt(l[1], l[3], l[4])">{{ l[0] }}</span>
          <i v-for="(h, i) in handles" :key="'h' + i" class="handle" :style="at(h[0] - 1, h[1] - 1, h[0] + 5, h[1] + 5)"></i>
        </main>

        <aside class="vscroll">
          <svg class="arr" width="9" height="5" viewBox="0 0 9 5"><path d="M4.500 0L8.500 4.500H.5z" fill="#444" /></svg>
          <span class="vthumb"><i></i><i></i><i></i></span>
          <svg class="arr dn" width="9" height="5" viewBox="0 0 9 5"><path d="M4.500 5L8.500 .5H.5z" fill="#444" /></svg>
        </aside>
      </div>

      <div class="hscroll">
        <svg class="ha" width="5" height="9" viewBox="0 0 5 9"><path d="M0 4.500L4.500 .5v8z" fill="#333" /></svg>
        <span class="hthumb"><i></i><i></i><i></i></span>
        <svg class="ha r" width="5" height="9" viewBox="0 0 5 9"><path d="M5 4.500L.5 .5v8z" fill="#333" /></svg>
      </div>
    </div>

    <footer class="taskbar">
      <svg width="1920" height="7" viewBox="0 0 1920 7">
        <ellipse cx="27" cy="14" rx="15" ry="13" fill="#b8d4e4" stroke="#2a6a9c" />
        <path d="M82 7Q94 3 101 3" stroke="#f0c020" stroke-width="3" fill="none" />
        <path d="M122 8V.5h53V8z" fill="#e4d4c4" stroke="#222" /><rect x="135" y="5" width="13" height="3" fill="#c8a868" />
        <path d="M177.500 0v7M181.500 0v7" stroke="#b8a490" />
        <path d="M184 8V.5h58V8z" fill="#e8e0e2" stroke="#222" /><ellipse cx="212" cy="12" rx="13" ry="9" fill="#fff" stroke="#e03030" stroke-width="2" />
        <rect x="261" y="4" width="28" height="4" fill="#f00000" /><path d="M344 4q6 0 7 4h-5z" fill="#e0a878" />
        <path d="M370 8V.5h53V8z" fill="#d8d8d4" stroke="#222" /><path d="M381 3.500h30" stroke="#567" stroke-width="3" stroke-dasharray="2 1" /><path d="M427 0v7" stroke="#aaa" />
        <path d="M1855 6h4M1862 6h4M1871 6h4M1878 6h4" stroke="#fff" stroke-width="2" />
        <rect x="1906.500" y=".5" width="14" height="8" fill="#86766f" stroke="#ccc0b8" />
      </svg>
    </footer>
  </div>
</template>

<style>
html, body { margin: 0; overflow: hidden; }
</style>

<style scoped>
.desktop { width: 1920px; height: 1048px; display: flex; flex-direction: column; overflow: hidden; font-family: "Noto Sans", "Open Sans", sans-serif; color: #000; background: #a08e98; }
.desktop * { box-sizing: border-box; }
.titlebar { height: 23px; display: flex; align-items: flex-start; background: linear-gradient(to right, #b6a3ab, #a08d96 40%, #97858f 60%, #ad9da6 90%, #a8979f); }
.appicon { margin: 4px 0 0 2px; flex: none; }
.wintitle { margin: 3px 0 0 5px; height: 19px; line-height: 19px; font-size: 13.5px; white-space: nowrap; transform-origin: 0 0; text-shadow: 0 0 7px #ece4e8, 0 0 7px #ece4e8, 0 0 10px #ece4e8; flex: none; }
.winbtns { display: flex; width: 104px; height: 19px; margin-left: auto; margin-right: 2px; border: 1px solid #fff9; border-top: 0; border-radius: 0 0 5px 5px; overflow: hidden; box-shadow: 0 0 0 1px #5a4a55; }
.wb { display: flex; align-items: center; justify-content: center; padding-bottom: 2px; background: linear-gradient(#cdc2c8, #b5a8b0 45%, #85757f 50%, #b0a0a9); border-right: 1px solid #5a4a55; }
.wb.min { width: 29px; } .wb.max { width: 26px; }
.wb.close { flex: 1; border: 0; background: linear-gradient(#dd9a8c, #cf6450 45%, #b42c10 50%, #d86038); }

.window { flex: none; height: 1018px; display: flex; flex-direction: column; border: solid #4a4048; border-width: 1px 1px 2px; border-left: 2px solid #7a6a72; border-right: 2px solid #5a4c54; background: #f0f0f0; }
.chrome { height: 46px; flex: none; display: flex; border-bottom: 1px solid #000; }
.bars { flex: 1; border-right: 1px solid #000; display: flex; flex-direction: column; }
.menubar { height: 21px; border-bottom: 1px solid #999; position: relative; }
.menu { position: absolute; top: 2px; line-height: 16px; font-size: 12px; }
.mt { display: inline-block; white-space: nowrap; transform-origin: 0 50%; font-size: 12px; }
.mt u { text-underline-offset: 2px; }
.mt.big { font-size: 12.5px; }
.toolbar { flex: 1; display: flex; align-items: flex-start; padding: 1px 2px 0 51px; border-top: 1px solid #fff; }
.tb { height: 21px; display: flex; align-items: center; justify-content: center; background: linear-gradient(135deg, #fff 40%, #d8d8d8); border: 1px solid #555; border-right-width: 1.5px; border-bottom: 2px solid #666; flex: none; }
.w21 { width: 21px; } .w22 { width: 22px; }
.off { border-color: #bbb; background: #e6e6e6; }
.gap { margin-left: 4px; }
.font { width: 154px; margin-left: 5px; justify-content: flex-start; padding-left: 5px; }
.ft { width: 129px; line-height: 18px; }
.div { width: 1px; height: 17px; background: #888; margin-right: 4px; }
.w34 { width: 34px; margin-left: 2px; } .w34.gap { margin-left: 4px; }
.help { margin-left: auto; width: 22px; margin-right: 1px; }
.viicon { width: 34px; padding: 6px 1px; }

.work { height: 952px; flex: none; display: flex; }
.panel { position: relative; width: 1899px; height: 951px; overflow: hidden; background-color: #fafafa; background-image: linear-gradient(#dedede 1px, transparent 1px), linear-gradient(to right, #dedede 1px, transparent 1px); background-size: 12px 12px; background-position: 8px 11px; }
.origin-v, .origin-h { position: absolute; background: #c4c4c4; }
.origin-v { left: 56px; top: 0; width: 1px; height: 951px; }
.origin-h { left: 0; top: 371px; width: 1899px; height: 1px; }
.origin { position: absolute; left: 51px; top: 366px; width: 10px; height: 10px; }

.chart { position: absolute; display: block; overflow: visible; }
.px { shape-rendering: crispEdges; }
.chart.plain { background: #fafafa; box-shadow: inset -1px -1px #888; }
.chart.light { background: #e1e1e1; box-shadow: inset -1px -1px #777, inset 1px 1px #eee; }
.chart.nob { box-shadow: inset -1px 0 #777, inset 1px 1px #eee; }
.chart.bar { background: linear-gradient(to right, #d4d4d4 0 9px, #c8c8c8 12px, #bfbfbf 13px, #bfbfbf calc(100% - 13px), #999 calc(100% - 8px), #777 calc(100% - 1px), #444 100%); box-shadow: inset 0 1px #d8d8d8; }
.chart.phase { background: linear-gradient(to right, #fff 0 6px, #e5e5e5 13px, #e5e5e5 calc(100% - 13px), #ccc calc(100% - 9px), #999 calc(100% - 2px), #555 100%); box-shadow: inset 0 -1px #999, inset 0 2px #fff; }
.chart.dev { background: linear-gradient(to right, #fff calc(100% - 13px), #ddd calc(100% - 9px), #999 calc(100% - 2px), #555 100%); box-shadow: inset 0 -1px #888; }

.frame { position: absolute; border: 1px solid; border-color: #bdbdbd #555 #555 #bdbdbd; box-shadow: inset 1px 1px 0 #5a5a5a, inset -1px -1px 0 #b9b9b9, inset -2px -2px 0 #d6d6d6; }
.plate { position: absolute; }
.plate.flat { background: #e1e1e1; border: 1px solid; border-color: #f0f0f0 #777 #777 #f0f0f0; }
.plate.dark { background: #b3b3b3; border: 1px solid; border-color: #ddd #555 #555 #ddd; border-right-width: 2px; border-bottom-width: 2px; }
.plate.metal { background: linear-gradient(to right, #d2d2d2 0 7px, #bfbfbf 9px, #bfbfbf calc(100% - 12px), #999 calc(100% - 7px), #666 100%); border-top: 2px solid #ccc; border-bottom: 2px solid #8a8a8a; }
.plate.tag { background: #bfbfbf; border: 1px solid; border-color: #777 #000 #000 #777; }
.sunken { position: absolute; border: solid; border-width: 3px 3px 3px 2px; border-color: rgba(120,120,120,.42) rgba(255,255,255,.85) rgba(255,255,255,.85) rgba(130,130,130,.35); background: #fafafa; background-clip: padding-box; }
.sunken.gray { background-color: #d1d1d1; }
.ring { position: absolute; display: flex; background: #c0c0c0; border: 1px solid; border-color: #999 #555 #555 #999; }
.steps { width: 7px; background: #c8c8c8; display: flex; border-right: 1px solid #777; }
.steps svg { width: 6px; height: 100%; }
.face { flex: 1; background: #b2b2b2; border: 1px solid; border-color: #ccc #999 #999 #ccc; }
.well { background: #adadad; border: 1px solid #bbb; box-shadow: inset 1px 1px #555, inset -1px -1px #e0e0e0; }
.well.lit { background: #d0d0d0; }
.knob { position: absolute; filter: drop-shadow(0 0 1px #aaa); }
.swatch { position: absolute; background: #fcfcfc; overflow: hidden; }
.tool { position: absolute; display: flex; background: #c4c4c4; border: 1px solid; border-color: #ddd #777 #777 #ddd; }
.tool.down { background: #707070; border-color: #555; }
.tool svg { width: 100%; height: 100%; }
.oval { position: absolute; border-radius: 50%; border: 2px solid #555; background: linear-gradient(#eee, #aaa 25%, #989898 60%, #777); box-shadow: 0 0 4px #bbb; }
.rec { left: 465px; top: 40px; width: 46px; height: 19px; border-width: 1.5px; }
.stop { left: 629px; top: 424px; width: 49px; height: 21px; background: linear-gradient(#fff, #e4e4e4 40%, #999); box-shadow: 2px 2px 3px #888; }
.lamp { position: absolute; right: 4px; top: 4px; width: 12px; height: 9px; background: #2c5416; clip-path: polygon(0 0, 60% 10%, 100% 50%, 60% 90%, 0 100%); }
.lamp.on { right: 3px; top: 3px; background: #4cf010; clip-path: polygon(0 0, 100% 50%, 0 100%); }
.rule-h { position: absolute; left: 1148px; top: 526px; width: 349px; height: 3px; background: #000; }
.rule-v { position: absolute; left: 1327px; top: 583px; width: 3px; height: 133px; background: #000; }
.label { position: absolute; white-space: nowrap; line-height: 1.362; transform-origin: 0 0; }
.handle { position: absolute; background: #3296f0; border: 1px solid #f4f4f4; }
.b { font-weight: 700; }
.red { color: #ff0000; } .red2 { color: #f01010; } .blue { color: #0000ee; } .maroon { color: #bd0000; }
.lblue { color: #1848d8; } .crimson { color: #d00020; } .pinkred { color: #ff0a30; }

.vscroll { width: 17px; flex: none; height: 951px; display: flex; flex-direction: column; align-items: center; background: linear-gradient(to right, #e6e6e6, #f4f4f4); padding-top: 7px; }
.vthumb { width: 15px; height: 465px; margin-top: 123px; border: 1px solid #999; border-radius: 2px; background: linear-gradient(to right, #f6f6f6, #e4e4e6 45%, #cfcfd2 50%, #c2c2c6); display: flex; flex-direction: column; gap: 2px; align-items: center; justify-content: center; }
.vthumb i { width: 7px; height: 1px; background: #444; }
.dn { margin-top: auto; margin-bottom: 6px; }
.hscroll { height: 17px; flex: none; width: 1899px; display: flex; align-items: center; padding: 1px 6px; background: linear-gradient(#e8e8e8, #f0f0f0); }
.hthumb { width: 1249px; height: 15px; margin-left: 284px; border: 1px solid #999; border-radius: 2px; background: linear-gradient(#f6f6f6, #e4e4e6 45%, #cfcfd2 50%, #c0c0c4); display: flex; gap: 2px; align-items: center; justify-content: center; }
.hthumb i { width: 1px; height: 7px; background: #444; }
.ha.r { margin-left: auto; }
.taskbar { height: 7px; flex: none; background: linear-gradient(to right, #776570, #7b6268 6%, #4a3326 13%, #55402e 40%, #33272a 60%, #4d3833 72%, #8a6a5c 85%, #3a2a28 92%, #735a50); }
.taskbar svg { display: block; }
</style>
